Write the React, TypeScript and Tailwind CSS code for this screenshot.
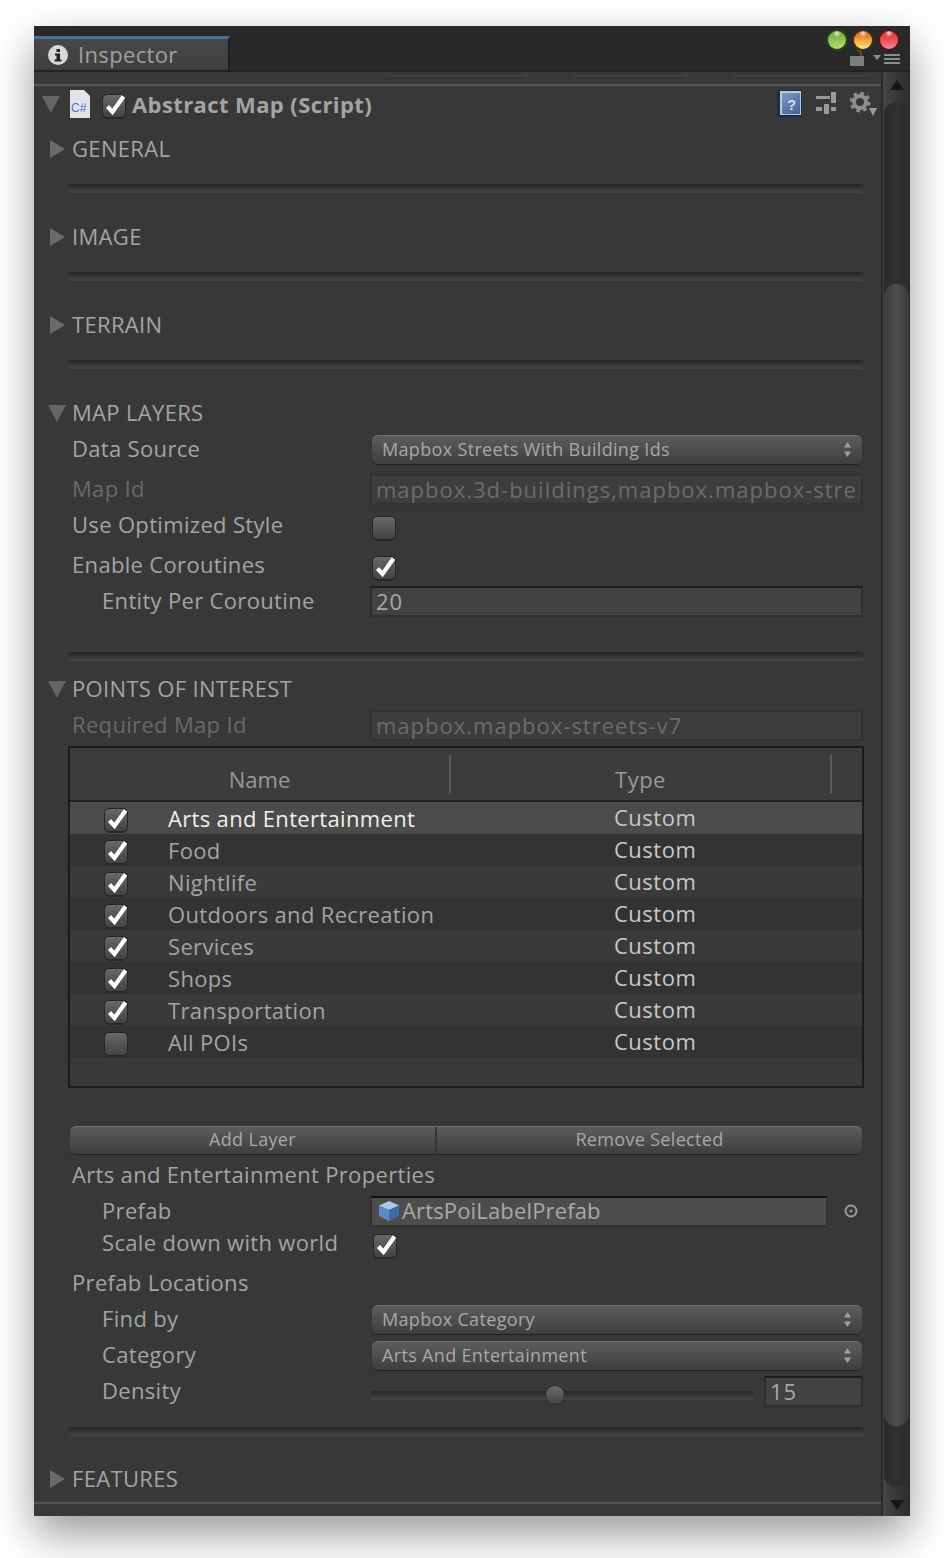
import React from "react";

const font = { fontFamily: '"Open Sans", "Noto Sans", sans-serif' };

function Tri({ open }: { open?: boolean }) {
  return (
    <svg width="18" height="18" viewBox="0 0 18 18" className="shrink-0">
      {open ? <polygon points="0,1 18,1 9,18" fill="#656565" /> : <polygon points="1,0 16,9 1,18" fill="#6a6a6a" />}
    </svg>
  );
}

function Check({ on = true, className = "" }: { on?: boolean; className?: string }) {
  return (
    <span className={"relative block h-[24px] w-[24px] shrink-0 rounded-[5px] border border-[#262626] bg-gradient-to-b from-[#686868] to-[#434343] shadow-[0_1px_0_#2a2a2a] " + className}>
      {on && (
        <svg width="26" height="24" viewBox="0 0 26 24" className="absolute left-[-1px] top-[-1px]">
          <path d="M5.5 12.5 L10.5 18 L21.5 2.5" fill="none" stroke="#ffffff" strokeWidth="4.2" />
        </svg>
      )}
    </span>
  );
}

function Sep({ top = 17, bottom = 26 }: { top?: number; bottom?: number }) {
  return (
    <div style={{ marginTop: top, marginBottom: bottom }} className="ml-[34px] mr-[17px] h-[9px] rounded-[4px] bg-gradient-to-b from-[#242424] to-[#474747]" />
  );
}

function Section({ label, open }: { label: string; open?: boolean }) {
  return (
    <div className={"flex h-[36px] items-center text-[22px] text-[#a4a4a4] " + (open ? "pl-[14px]" : "pl-[15px]")}>
      <Tri open={open} />
      <span className={"pb-[2px] " + (open ? "ml-[6px]" : "ml-[5px]")}>{label}</span>
    </div>
  );
}

function Row({ label, indent, dim, h = 36, mt = 0, children }: { label: string; indent?: boolean; dim?: boolean; h?: number; mt?: number; children?: React.ReactNode }) {
  return (
    <div style={{ height: h, marginTop: mt }} className="flex items-center text-[22px]">
      <span className={"pb-[2px] " + (indent ? "w-[336px] pl-[68px] " : "w-[336px] pl-[38px] ") + (dim ? "text-[#696969]" : "text-[#a4a4a4]")}>{label}</span>
      <div className="flex w-[493px] items-center">{children}</div>
    </div>
  );
}

function Popup({ text }: { text: string }) {
  return (
    <div className="ml-[2px] flex h-[29px] w-[490px] items-center justify-between rounded-[6px] border-t border-t-[#707070] bg-gradient-to-b from-[#5c5c5c] to-[#3e3e3e] pl-[10px] pr-[10px] text-[18px] text-[#a8a8a8] shadow-[0_1px_1px_#222222]">
      <span>{text}</span>
      <svg width="9" height="17" viewBox="0 0 9 17"><polygon points="4.5,1 8,6.5 1,6.5" fill="#a0a0a0" /><polygon points="4.5,16 8,10.5 1,10.5" fill="#a0a0a0" /></svg>
    </div>
  );
}

function Field({ text, dim }: { text: string; dim?: boolean }) {
  return (
    <div className={"flex h-[31px] w-full items-center overflow-hidden whitespace-nowrap border-x-2 border-b-2 pl-[4px] text-[22px] tracking-[1px] " + (dim ? "border-t-2 border-[#333333] border-t-[#333333] bg-[#3d3d3d] text-[#6c6c6c]" : "border-t-2 border-x-[#2e2e2e] border-b-[#2e2e2e] border-t-[#1c1c1c] bg-[#424242] text-[#a8a8a8]")}>{text}</div>
  );
}

const rows = [
  ["Arts and Entertainment", true],
  ["Food", true],
  ["Nightlife", true],
  ["Outdoors and Recreation", true],
  ["Services", true],
  ["Shops", true],
  ["Transportation", true],
  ["All POIs", false],
] as [string, boolean][];

function TableRow({ name, on, i }: { name: string; on: boolean; i: number }) {
  const bg = i === 0 ? "bg-[#4b4b4b]" : i % 2 === 1 ? "bg-[#333333]" : "bg-[#3a3a3a]";
  return (
    <div className={"flex h-[32px] items-center text-[22px] " + bg}>
      <Check on={on} className="ml-[34px] mt-[4px]" />
      <span className={"ml-[40px] w-[446px] " + (i === 0 ? "text-[#efefef]" : "text-[#a4a4a4]")}>{name}</span>
      <span className="pb-[2px] tracking-[0.5px] text-[#c8c8c8]">Custom</span>
    </div>
  );
}

function Cube() {
  return (
    <svg width="22" height="22" viewBox="0 0 22 22" className="shrink-0">
      <polygon points="11,1 21,5.5 11,10 1,5.5" fill="#a9c8ee" />
      <polygon points="1,5.5 11,10 11,21 1,16" fill="#5a8cc8" />
      <polygon points="21,5.5 11,10 11,21 21,16" fill="#3f6ca8" />
    </svg>
  );
}

function Scrollbar() {
  return (
    <div className="flex w-[29px] shrink-0 flex-col items-center border-l-2 border-l-[#2a2a2a] bg-gradient-to-r from-[#444444] via-[#383838] to-[#2c2c2c]">
      <svg width="16" height="14" viewBox="0 0 16 14" className="mt-[7px]"><polygon points="8,1 15,11 1,11" fill="#161616" /></svg>
      <div className="mt-[9px] h-[1385px] w-[25px] rounded-[12px] bg-gradient-to-r from-[#2b2b2b] via-[#303030] to-[#2b2b2b] pt-[182px]">
        <div className="h-[1142px] w-full rounded-[12px] bg-gradient-to-r from-[#3c3c3c] via-[#4e4e4e] to-[#3a3a3a]" />
      </div>
      <svg width="16" height="14" viewBox="0 0 16 14" className="mt-[11px]"><polygon points="1,2 15,2 8,12" fill="#161616" /></svg>
    </div>
  );
}

export default function App() {
  return (
    <div style={font} className="h-[1558px] w-[944px] overflow-hidden bg-white pl-[34px] pt-[26px] tracking-[0.33px]">
      <div className="flex h-[1490px] w-[876px] flex-col bg-[#383838] shadow-[0_18px_40px_rgba(0,0,0,0.4)]">
        {/* title strip */}
        <div className="flex h-[46px] shrink-0 items-end border-b-2 border-b-[#222222] bg-[#292929]">
          <div className="flex h-[34px] w-[196px] items-center border-r-2 border-t-[3px] border-r-[#1f1f1f] border-t-[#4a6fa8] bg-gradient-to-b from-[#484848] to-[#3e3e3e] pl-[14px]">
            <svg width="20" height="20" viewBox="0 0 20 20" className="shrink-0">
              <circle cx="10" cy="10" r="10" fill="#d8d8d8" />
              <rect x="8.5" y="4" width="3.5" height="3" fill="#222222" />
              <path d="M7 8.5h5v6h1.5v2h-7v-2H8.5v-4H7z" fill="#222222" />
            </svg>
            <span className="ml-[10px] text-[22px] tracking-[0.35px] text-[#a0a0a0]">Inspector</span>
          </div>
          <div className="relative h-full flex-1">
            <div className="absolute right-[12px] top-[5px] flex gap-[8px]">
              <span className="block h-[18px] w-[18px] rounded-full bg-[radial-gradient(circle_at_50%_12%,#e8f5d0_0,transparent_22%),linear-gradient(#6fa83c,#b5df6e)] shadow-[0_0_0_2px_#25401b]" />
              <span className="block h-[18px] w-[18px] rounded-full bg-[radial-gradient(circle_at_50%_12%,#ffe6c8_0,transparent_22%),linear-gradient(#c4612a,#f2a53c_50%,#ffe584)] shadow-[0_0_0_2px_#4a2a14]" />
              <span className="block h-[18px] w-[18px] rounded-full bg-[radial-gradient(circle_at_50%_12%,#ffd8d8_0,transparent_22%),linear-gradient(#df2f36,#e8505a_50%,#ee8c98)] shadow-[0_0_0_2px_#4a1a1c]" />
            </div>
            <div className="absolute right-[10px] top-[24px] flex items-end">
              <svg width="14" height="16" viewBox="0 0 14 16" className="mr-[6px]"><rect y="6" width="14" height="10" fill="#7d7d7d" /><path d="M11 6 V2 L7 0" stroke="#555555" strokeWidth="1.5" fill="none" /></svg>
              <svg width="30" height="11" viewBox="0 0 30 11" className="mb-[1px]"><polygon points="3,1 11,1 7,6" fill="#8c8c8c" /><rect x="14" y="0" width="16" height="2" fill="#8c8c8c" /><rect x="14" y="4" width="16" height="2" fill="#8c8c8c" /><rect x="14" y="8" width="16" height="2" fill="#8c8c8c" /></svg>
            </div>
          </div>
        </div>

        <div className="flex min-h-0 flex-1">
          <div className="min-w-0 flex-1">
            {/* clipped previous component */}
            <div className="flex h-[12px] gap-[44px] pl-[352px] pr-[10px]">
              <div className="h-[4px] w-[142px] border-x border-b border-[#444444]" />
              <div className="h-[4px] w-[116px] border-x border-b border-[#444444]" />
              <div className="h-[4px] flex-1 border-x border-b border-[#444444]" />
            </div>
            <div className="h-[2px] bg-[#555555]" />

            {/* component header */}
            <div className="flex h-[45px] items-start pt-[4px]">
              <div className="ml-[8px] mt-[5px]"><Tri open /></div>
              <svg width="20" height="28" viewBox="0 0 20 28" className="ml-[10px] shrink-0">
                <path d="M0 0H14L20 6V28H0Z" fill="#dfe3ea" />
                <text x="1" y="22" fontSize="12" fill="#4a74c4" fontFamily="Liberation Sans, sans-serif" className="tracking-normal">C#</text>
              </svg>
              <Check className="ml-[12px] mt-[4px]" />
              <span className="ml-[6px] mt-[-1px] text-[22px] font-bold leading-[30px] tracking-[0.4px] text-[#a4a4a4]">Abstract Map (Script)</span>
              <div className="ml-auto mr-[4px] flex items-start">
                <svg width="25" height="27" viewBox="0 0 25 27">
                  <defs>
                    <linearGradient id="helpg" x1="0" y1="0" x2="0.6" y2="1">
                      <stop offset="0" stopColor="#7f9ac2" />
                      <stop offset="1" stopColor="#4a6a9a" />
                    </linearGradient>
                  </defs>
                  <rect x="0" y="0" width="25" height="27" fill="#1c2c4c" />
                  <rect x="3" y="1" width="21" height="24" fill="#b8c6da" />
                  <rect x="5" y="3" width="18" height="21" fill="url(#helpg)" />
                  <text x="10" y="20" fontSize="15" fontWeight="700" fill="#d6deea" fontFamily="Liberation Sans, sans-serif" className="tracking-normal">?</text>
                </svg>
                <svg width="20" height="22" viewBox="0 0 20 22" className="ml-[14px] mt-[2px]" fill="#999999">
                  <rect x="0" y="4" width="14" height="3" /><rect x="15" y="0" width="5" height="11" />
                  <rect x="0" y="15" width="6" height="4" /><rect x="8" y="12" width="5" height="10" /><rect x="15" y="15" width="5" height="4" />
                </svg>
                <svg width="27" height="24" viewBox="0 0 27 24" className="ml-[14px] mt-[2px]">
                  <circle cx="10" cy="10" r="6" fill="none" stroke="#8e8e8e" strokeWidth="4" />
                  <circle cx="10" cy="10" r="9" fill="none" stroke="#8e8e8e" strokeWidth="3" strokeDasharray="3.6 3.47" />
                  <polygon points="19,16 27,16 23,24" fill="#999999" />
                </svg>
              </div>
            </div>

            <Section label="GENERAL" />
            <Sep />
            <Section label="IMAGE" />
            <Sep />
            <Section label="TERRAIN" />
            <Sep />

            <Section label="MAP LAYERS" open />
            <Row label="Data Source"><Popup text="Mapbox Streets With Building Ids" /></Row>
            <Row label="Map Id" dim mt={4}><Field dim text="mapbox.3d-buildings,mapbox.mapbox-stre" /></Row>
            <Row label="Use Optimized Style"><Check on={false} className="ml-[2px] mt-[6px]" /></Row>
            <Row label="Enable Coroutines" mt={4}><Check className="ml-[2px] mt-[6px]" /></Row>
            <Row label="Entity Per Coroutine" indent><Field text="20" /></Row>
            <Sep top={33} bottom={10} />

            <Section label="POINTS OF INTEREST" open />
            <Row label="Required Map Id" dim><Field dim text="mapbox.mapbox-streets-v7" /></Row>

            <div className="ml-[34px] mr-[17px] mt-[3px] border-2 border-[#1b1b1b] bg-[#393939]">
              <div className="flex h-[54px] items-center border-b-2 border-b-[#222222] bg-[#3c3c3c] text-[22px] tracking-normal text-[#989898]">
                <span className="w-[379px] pt-[10px] text-center">Name</span>
                <span className="block h-[38px] w-[2px] bg-[#5a5a5a]" />
                <span className="w-[379px] pt-[10px] text-center tracking-[0.5px]">Type</span>
                <span className="block h-[38px] w-[2px] bg-[#5a5a5a]" />
              </div>
              {rows.map(([n, on], i) => (
                <TableRow key={n} name={n} on={on} i={i} />
              ))}
              <div className="h-[28px]" />
            </div>

            <div className="ml-[36px] mr-[19px] mt-[38px] flex h-[28px] rounded-[6px] border-t border-t-[#707070] bg-gradient-to-b from-[#5c5c5c] to-[#3e3e3e] text-[18px] text-[#a8a8a8] shadow-[0_1px_1px_#222222]">
              <div className="flex w-[367px] items-center justify-center border-r-2 border-r-[#383838] pb-[3px]">Add Layer</div>
              <div className="flex flex-1 items-center justify-center pb-[3px]">Remove Selected</div>
            </div>

            <div className="mt-[3px] flex h-[36px] items-center pb-[2px] pl-[38px] text-[22px] text-[#a4a4a4]">Arts and Entertainment Properties</div>
            <Row label="Prefab" indent>
              <div className="flex h-[31px] w-[458px] items-center border-2 border-x-[#333333] border-b-[#333333] border-t-[#141414] bg-[#4d4d4d] pb-[1px] pl-[6px] text-[22px] text-[#a8a8a8]">
                <Cube />
                <span className="ml-[2px] tracking-[0.15px]">ArtsPoiLabelPrefab</span>
              </div>
              <svg width="14" height="14" viewBox="0 0 14 14" className="ml-[16px]"><circle cx="7" cy="7" r="5.5" fill="none" stroke="#9a9a9a" strokeWidth="2" /><circle cx="7" cy="7" r="1.5" fill="#9a9a9a" /></svg>
            </Row>
            <Row label="Scale down with world" indent h={32} mt={-2}><Check className="ml-[3px] mt-[6px]" /></Row>
            <div className="mt-[6px] flex h-[36px] items-center pb-[2px] pl-[38px] text-[22px] text-[#a4a4a4]">Prefab Locations</div>
            <Row label="Find by" indent><Popup text="Mapbox Category" /></Row>
            <Row label="Category" indent><Popup text="Arts And Entertainment" /></Row>
            <Row label="Density" indent>
              <div className="relative mt-[8px] h-[9px] w-[384px] rounded-[4px] bg-gradient-to-b from-[#262626] to-[#474747]">
                <span className="absolute left-[175px] top-[-6px] block h-[20px] w-[20px] rounded-full border border-[#2e2e2e] bg-gradient-to-b from-[#6a6a6a] to-[#444444]" />
              </div>
              <div className="ml-[10px] w-[99px]"><Field text="15" /></div>
            </Row>
            <Sep top={18} bottom={25} />
            <Section label="FEATURES" />
            <div className="mt-[5px] h-[2px] bg-[#555555]" />
          </div>
          <Scrollbar />
        </div>
      </div>
    </div>
  );
}
